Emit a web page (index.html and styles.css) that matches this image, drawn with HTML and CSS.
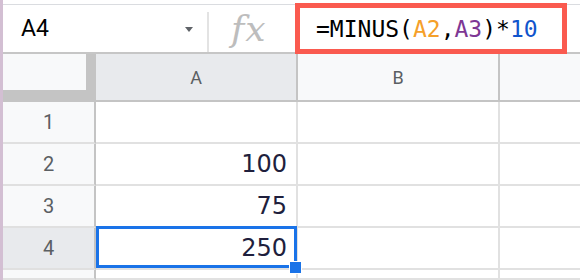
FILE: index.html
```html
<!DOCTYPE html>
<html lang="en">
<head>
    <meta charset="UTF-8">
    <title>MINUS</title>
    <link rel="stylesheet" href="styles.css">
</head>
<body>
    <div class="app">
        <div class="edge"></div>
        <div class="main">
            <div class="bar">
                <div class="namebox"><span class="ref">A4</span><span class="caret"></span></div>
                <div class="sep"></div>
                <div class="fx">fx</div>
                <div class="formula">=MINUS(<span class="r1">A2</span>,<span class="r2">A3</span>)*<span class="num">10</span></div>
            </div>
            <div class="sheet">
                <div class="corner"><div class="corner-box"></div></div>
                <div class="hd sel">A</div>
                <div class="hd">B</div>
                <div class="hd last"></div>

                <div class="rh">1</div>
                <div class="cell"></div>
                <div class="cell"></div>
                <div class="cell last"></div>

                <div class="rh">2</div>
                <div class="cell">100</div>
                <div class="cell"></div>
                <div class="cell last"></div>

                <div class="rh">3</div>
                <div class="cell">75</div>
                <div class="cell"></div>
                <div class="cell last"></div>

                <div class="rh sel">4</div>
                <div class="cell active">250<span class="handle"></span></div>
                <div class="cell"></div>
                <div class="cell last"></div>

                <div class="rh"></div>
                <div class="cell"></div>
                <div class="cell"></div>
                <div class="cell last"></div>
            </div>
        </div>
    </div>
</body>
</html>
```
FILE: styles.css
```css
*{margin:0;padding:0;box-sizing:border-box;}
html,body{height:280px;overflow:hidden;background:#fff;}
.app{display:flex;height:280px;}
.edge{width:3px;background:#d3bfd3;}
.main{flex:1;display:flex;flex-direction:column;}

/* formula bar */
.bar{display:flex;margin-top:4px;height:50px;border-top:1px solid #dadce0;border-bottom:2px solid #c6c6c6;}
.namebox{width:204px;display:flex;align-items:center;justify-content:space-between;padding:0 14px 0 18px;}
.ref{font-family:Roboto,"Liberation Sans",sans-serif;font-size:23px;color:#000;}
.caret{width:0;height:0;border-left:4.5px solid transparent;border-right:4.5px solid transparent;border-top:5px solid #5f6368;margin-top:2px;}
.sep{align-self:flex-end;width:2px;height:40px;background:#e3e3e3;}
.fx{width:86px;padding-left:22px;display:flex;align-items:center;font-family:"DejaVu Serif",serif;font-style:italic;font-size:36px;letter-spacing:1px;color:#bdbdbd;}
.formula{align-self:flex-start;margin-top:-2px;width:272px;height:51px;border:5px solid #fa5a4f;padding-left:16px;display:flex;align-items:center;font-family:"DejaVu Sans Mono",monospace;font-size:23px;color:#000;white-space:nowrap;}
.r1{color:#f5a02a;}
.r2{color:#7e3794;}
.num{color:#1155cc;}

/* grid */
.sheet{flex:1;display:grid;grid-template-columns:93px 202px 202px 1fr;grid-template-rows:48px repeat(4,42px) 1fr;}
.corner{background:#c4c4c4;}
.corner-box{width:83px;height:36px;background:#f8f9fa;}
.hd{background:#f8f9fa;border-right:2px solid #c4c4c4;border-bottom:2px solid #c4c4c4;display:flex;align-items:center;justify-content:center;font-family:Roboto,"Liberation Sans",sans-serif;font-size:18px;color:#5b5f63;}
.hd.sel,.rh.sel{background:#e8eaed;}
.rh{background:#f8f9fa;border-right:2px solid #c4c4c4;border-bottom:2px solid #e0e0e0;display:flex;align-items:center;justify-content:center;font-family:Roboto,"Liberation Sans",sans-serif;font-size:20px;color:#5b5f63;}
.cell{border-right:2px solid #e1e1e1;border-bottom:2px solid #e1e1e1;display:flex;align-items:center;justify-content:flex-end;padding-right:9px;font-family:"DejaVu Sans",sans-serif;font-size:24px;color:#1f1f3d;}
.last{border-right:none;}
.cell.active{position:relative;}
.cell.active::before{content:"";position:absolute;top:-2px;left:0;right:-1px;bottom:0;border:3px solid #1a73e8;}
.handle{position:absolute;right:-6px;bottom:-6px;width:13px;height:13px;background:#1a73e8;border:1px solid #fff;}
```
